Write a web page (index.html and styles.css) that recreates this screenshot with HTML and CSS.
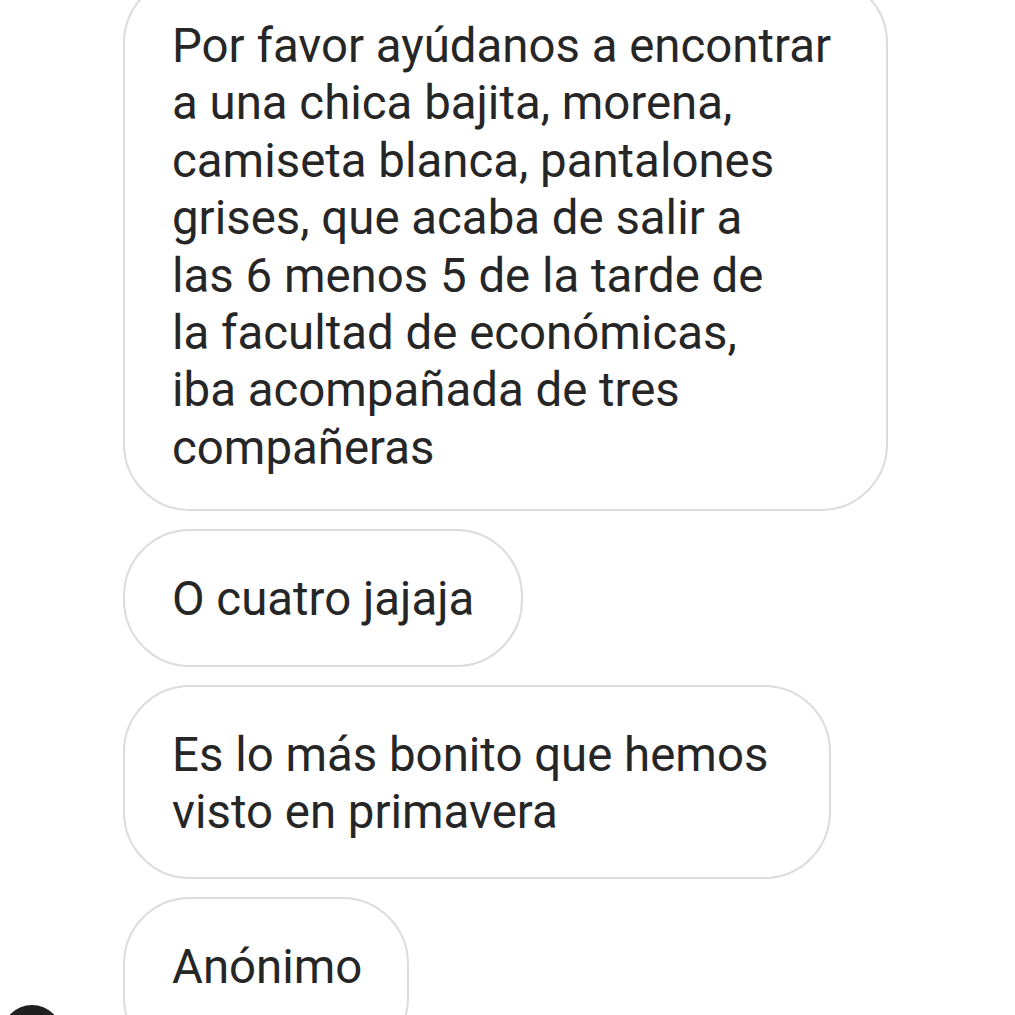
FILE: index.html
```html
<!DOCTYPE html>
<html lang="es">
<head>
<meta charset="utf-8">
<title>Mensajes</title>
<link rel="stylesheet" href="styles.css">
</head>
<body>
<main class="thread">
  <div class="gutter"></div>
  <div class="bubble wide">Por favor ayúdanos a encontrar<br>a una chica bajita, morena,<br>camiseta blanca, pantalones<br>grises, que acaba de salir a<br>las 6 menos 5 de la tarde de<br>la facultad de económicas,<br>iba acompañada de tres<br>compañeras</div>

  <div class="gutter"></div>
  <div class="bubble">O cuatro jajaja</div>

  <div class="gutter"></div>
  <div class="bubble mid">Es lo más bonito que hemos<br>visto en primavera</div>

  <div class="gutter"><div class="avatar"></div></div>
  <div class="bubble short">Anónimo</div>
</main>
</body>
</html>
```

FILE: styles.css
```css
html, body {
  margin: 0;
  padding: 0;
  background: #ffffff;
  overflow: hidden;
}

.thread {
  display: grid;
  grid-template-columns: 123px 1fr;
  row-gap: 18px;
  margin-top: -24px;
  font-family: Roboto, "Noto Sans", Arial, sans-serif;
  font-size: 47.4px;
  line-height: 57.4px;
  color: #262626;
}

.gutter {
  position: relative;
}

.bubble {
  justify-self: start;
  border: 2px solid #dcdcdc;
  border-radius: 67px;
  padding: 40px 47px 36px 47px;
  white-space: nowrap;
}

.wide {
  padding-right: 55px;
  padding-bottom: 32px;
}

.mid {
  padding-right: 61px;
}

.short {
  padding-right: 45px;
}

.avatar {
  width: 60px;
  height: 60px;
  border-radius: 50%;
  background: #1f1f1f;
  margin-left: 2px;
  margin-top: 108px;
}
```
